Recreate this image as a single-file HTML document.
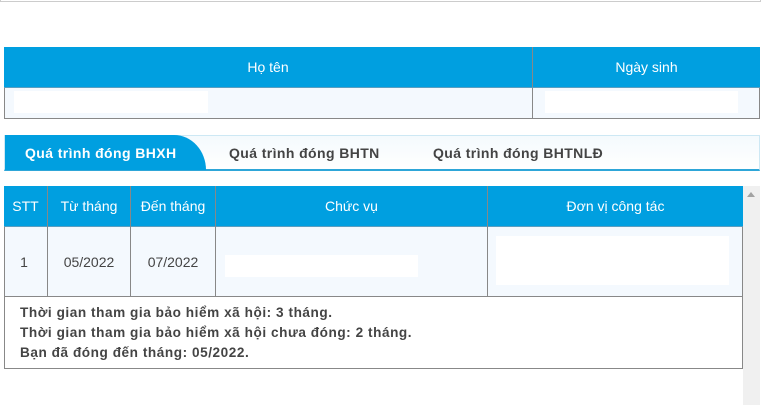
<!DOCTYPE html>
<html><head><meta charset="utf-8"><style>
*{margin:0;padding:0;box-sizing:border-box}
body{width:770px;height:405px;background:#fff;position:relative;overflow:hidden;font-family:"Liberation Sans","DejaVu Sans",sans-serif}
.a{position:absolute}
.hd{color:#fff;font-size:14px;text-align:center;line-height:40px}
.tab{font-weight:bold;font-size:14px;color:#444;line-height:36px;letter-spacing:0.4px}
.cell{color:#444;font-size:14px;text-align:center;line-height:70px}
.sum{font-weight:bold;font-size:13.6px;color:#444;line-height:20px;letter-spacing:0.55px}
</style></head><body>
<div class="a" style="left:0;top:-10px;width:761px;height:12px;border:1px solid #ccc;border-top:none"></div>

<div class="a" style="left:4px;top:47px;width:756px;height:72px;border:1px solid #888;border-top:none;background:#f4f9fe"></div>
<div class="a hd" style="left:4px;top:47px;width:528px;height:41px;background:#009fe0">Họ tên</div>
<div class="a hd" style="left:533px;top:47px;width:227px;height:41px;background:#009fe0">Ngày sinh</div>
<div class="a" style="left:532px;top:47px;width:1px;height:72px;background:#888"></div>
<div class="a" style="left:4px;top:87px;width:756px;height:1px;background:#5a9ec0"></div>
<div class="a" style="left:14px;top:91px;width:194px;height:22px;background:#fff"></div>
<div class="a" style="left:545px;top:91px;width:193px;height:22px;background:#fff"></div>

<div class="a" style="left:4px;top:135px;width:756px;height:36px;border:1px solid #cde8f4;border-bottom:2px solid #2ea6d8;background:linear-gradient(#f4fafd,#fff)"></div>
<div class="a tab" style="left:5px;top:135px;width:201px;height:35px;background:#009fe0;border-top-right-radius:32px 35px;color:#fff;padding-left:20px">Quá trình đóng BHXH</div>
<div class="a tab" style="left:229px;top:135px">Quá trình đóng BHTN</div>
<div class="a tab" style="left:433px;top:135px">Quá trình đóng BHTNLĐ</div>

<div class="a" style="left:743px;top:186px;width:17px;height:219px;background:#f0f0f0"></div>
<div class="a" style="left:747px;top:192px;width:0;height:0;border-left:4px solid transparent;border-right:4px solid transparent;border-bottom:5px solid #a3a3a3"></div>

<div class="a" style="left:4px;top:186px;width:739px;height:183px;border:1px solid #888;border-top:none;background:#fff"></div>
<div class="a" style="left:4px;top:186px;width:739px;height:41px;background:#009fe0"></div>
<div class="a" style="left:5px;top:227px;width:737px;height:70px;background:#f4f9fe"></div>
<div class="a" style="left:4px;top:296px;width:739px;height:1px;background:#888"></div>
<div class="a" style="left:4px;top:226px;width:739px;height:1px;background:#5a9ec0"></div>
<div class="a" style="left:47px;top:186px;width:1px;height:111px;background:#888"></div>
<div class="a" style="left:130px;top:186px;width:1px;height:111px;background:#888"></div>
<div class="a" style="left:215px;top:186px;width:1px;height:111px;background:#888"></div>
<div class="a" style="left:487px;top:186px;width:1px;height:111px;background:#888"></div>
<div class="a hd" style="left:4px;top:186px;width:43px">STT</div>
<div class="a hd" style="left:48px;top:186px;width:82px">Từ tháng</div>
<div class="a hd" style="left:131px;top:186px;width:84px">Đến tháng</div>
<div class="a hd" style="left:216px;top:186px;width:271px">Chức vụ</div>
<div class="a hd" style="left:488px;top:186px;width:255px">Đơn vị công tác</div>
<div class="a cell" style="left:4px;top:227px;width:40px">1</div>
<div class="a cell" style="left:48px;top:227px;width:82px">05/2022</div>
<div class="a cell" style="left:131px;top:227px;width:84px">07/2022</div>
<div class="a" style="left:225px;top:255px;width:193px;height:22px;background:#fff"></div>
<div class="a" style="left:496px;top:236px;width:233px;height:49px;background:#fff"></div>
<div class="a sum" style="left:20px;top:303px">Thời gian tham gia bảo hiểm xã hội: 3 tháng.<br>Thời gian tham gia bảo hiểm xã hội chưa đóng: 2 tháng.<br>Bạn đã đóng đến tháng: 05/2022.</div>
</body></html>
